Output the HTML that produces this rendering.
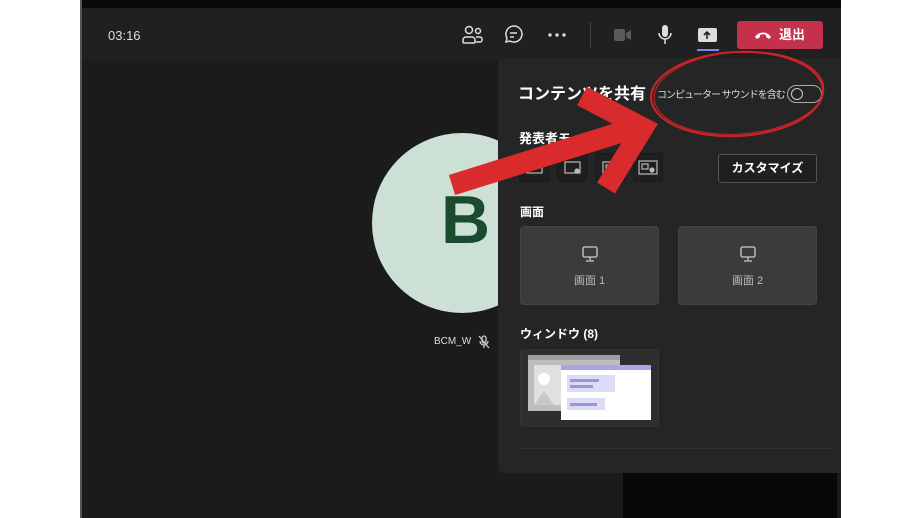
<!DOCTYPE html><html><head><meta charset="utf-8"><style>
*{margin:0;padding:0;box-sizing:border-box}
body{width:921px;height:518px;background:#fff;position:relative;overflow:hidden;font-family:"Liberation Sans","Noto Sans CJK JP",sans-serif;color:#fff}
.a{position:absolute}
.mb{position:absolute;width:30px;height:29px;border:1px solid #1a1a1a;background:#1f1f1f;border-radius:3px;top:153px}
.card{position:absolute;background:#3b3b3b;border-radius:4px;border:1px solid #444}
</style></head><body>
<div class="a" style="left:80px;top:0;width:2px;height:518px;background:#555"></div>
<div class="a" style="left:82px;top:0;width:759px;height:518px;background:#1b1b1b"></div>
<div class="a" style="left:82px;top:0;width:759px;height:8px;background:#0a0a0a"></div>
<div class="a" style="left:82px;top:8px;width:759px;height:53px;background:#202020"></div>
<div class="a" style="left:108px;top:28px;font-size:13px;color:#ddd">03:16</div>
<svg class="a" style="left:455px;top:20px" width="380" height="36" viewBox="455 20 380 36" fill="none" stroke="#ddd" stroke-width="1.5">
<circle cx="469" cy="30" r="3.5"/><circle cx="478" cy="31" r="2.5"/><path d="M463 42v-2a3 3 0 0 1 3-3h6a3 3 0 0 1 3 3v2a1 1 0 0 1-1 1h-10a1 1 0 0 1-1-1zM476 37h4a2 2 0 0 1 2 2v1a2 2 0 0 1-2 2h-4"/>
<path d="M506 42l1-4a8 8 0 1 1 3 3z"/><path d="M510 33h7M510 37h4"/>
<g fill="#ddd" stroke="none"><circle cx="550" cy="35" r="1.7"/><circle cx="557" cy="35" r="1.7"/><circle cx="564" cy="35" r="1.7"/>
<rect x="614" y="29" width="11" height="12" rx="2" fill="#5a5a5a"/><path d="M626 33l5-3v10l-5-3z" fill="#5a5a5a"/>
<rect x="662" y="25" width="6" height="12" rx="3"/>
<rect x="698" y="28" width="19" height="14" rx="2"/><rect x="697" y="49" width="22" height="2" fill="#7f85f5"/></g>
<path d="M659 33a6 6 0 0 0 12 0M665 39v5"/>
<path d="M707 39v-7M704 35l3-3 3 3" stroke="#202020" stroke-width="1.6"/>
</svg>
<div class="a" style="left:590px;top:22px;width:1px;height:26px;background:#444"></div>
<div class="a" style="left:737px;top:21px;width:86px;height:28px;background:#c4314b;border-radius:3px;font-size:13px;font-weight:bold;line-height:28px;padding-left:42px">退出</div>
<svg class="a" style="left:753px;top:29px" width="20" height="12"><path d="M2 8c4-6 12-6 16 0l-2 2-3-2v-2c-2-1-4-1-6 0v2l-3 2z" fill="#fff"/></svg>
<div class="a" style="left:372px;top:133px;width:180px;height:180px;border-radius:50%;background:#cde0d6"></div>
<div class="a" style="left:441px;top:186px;font-size:68px;font-weight:bold;color:#1c4a2e;line-height:68px">B</div>
<div class="a" style="left:434px;top:336px;font-size:10px;color:#ddd">BCM_W</div>
<svg class="a" style="left:478px;top:335px" width="12" height="14" fill="none" stroke="#ccc" stroke-width="1.3"><rect x="4" y="1" width="4" height="7" rx="2"/><path d="M2 6a4 4 0 0 0 8 0M6 10v3M1 1l10 12"/></svg>
<div class="a" style="left:498px;top:58px;width:343px;height:415px;background:#252525;border-radius:4px 0 0 4px"></div>
<div class="a" style="left:623px;top:473px;width:214px;height:45px;background:#080808"></div>
<div class="a" style="left:518px;top:80px;font-size:16px;font-weight:bold">コンテンツを共有</div>
<div class="a" style="left:657px;top:86px;font-size:10px;letter-spacing:-1px;color:#ddd;white-space:nowrap">コンピューター サウンドを含む</div>
<div class="a" style="left:787px;top:85px;width:35px;height:18px;border:1px solid #aaa;border-radius:9px"></div>
<div class="a" style="left:791px;top:88px;width:12px;height:12px;border:1.5px solid #ccc;border-radius:50%"></div>
<div class="a" style="left:519px;top:128px;font-size:13px;font-weight:bold">発表者モード</div>
<div class="mb" style="left:519px"></div><div class="mb" style="left:557px"></div><div class="mb" style="left:595px"></div><div class="mb" style="left:633px"></div>
<svg class="a" style="left:519px;top:153px" width="150" height="30" fill="none" stroke="#bbb" stroke-width="1.2">
<rect x="8" y="9" width="15" height="11"/><rect x="46" y="9" width="15" height="11"/><circle cx="58" cy="18" r="2" fill="#bbb"/><rect x="84" y="9" width="15" height="11"/><rect x="87" y="12" width="6" height="5"/><rect x="120" y="8" width="18" height="13"/><rect x="123" y="11" width="6" height="5"/><circle cx="133" cy="17" r="2" fill="#bbb"/></svg>
<div class="a" style="left:718px;top:154px;width:99px;height:29px;border:1px solid #555;background:#1f1f1f;border-radius:3px;font-size:12px;font-weight:bold;text-align:center;line-height:27px">カスタマイズ</div>
<div class="a" style="left:520px;top:203px;font-size:12px;font-weight:bold">画面</div>
<div class="card" style="left:520px;top:226px;width:139px;height:79px"></div>
<div class="card" style="left:678px;top:226px;width:139px;height:79px"></div>
<svg class="a" style="left:581px;top:246px" width="18" height="17" fill="none" stroke="#ccc" stroke-width="1.3"><rect x="2" y="1" width="14" height="10" rx="1.5"/><path d="M9 11v3M5 15h8"/></svg>
<svg class="a" style="left:739px;top:246px" width="18" height="17" fill="none" stroke="#ccc" stroke-width="1.3"><rect x="2" y="1" width="14" height="10" rx="1.5"/><path d="M9 11v3M5 15h8"/></svg>
<div class="a" style="left:574px;top:272px;font-size:11px;color:#bbb">画面 1</div>
<div class="a" style="left:732px;top:272px;font-size:11px;color:#bbb">画面 2</div>
<div class="a" style="left:520px;top:325px;font-size:12px;font-weight:bold">ウィンドウ (8)</div>
<div class="card" style="left:520px;top:349px;width:139px;height:78px;background:#2e2e2e;border-color:#333"></div>
<svg class="a" style="left:528px;top:354px" width="125" height="70">
<rect x="0" y="1" width="92" height="56" fill="#bdbdbd"/><rect x="0" y="1" width="92" height="5" fill="#9e9e9e"/><rect x="6" y="11" width="30" height="40" fill="#e0e0e0"/><circle cx="16" cy="25" r="6" fill="#fff"/><path d="M6 51l10-14 10 14z" fill="#c8c8c8"/>
<rect x="33" y="11" width="90" height="55" fill="#fff"/><rect x="33" y="11" width="90" height="5" fill="#a9a5e6"/>
<rect x="39" y="21" width="48" height="17" fill="#dcdcf5"/><rect x="42" y="25" width="29" height="3" fill="#9a97d8"/><rect x="42" y="31" width="23" height="3" fill="#9a97d8"/><rect x="39" y="44" width="38" height="12" fill="#dcdcf5"/><rect x="42" y="49" width="27" height="3" fill="#9a97d8"/></svg>
<div class="a" style="left:520px;top:448px;width:311px;height:1px;background:#333"></div>
<svg class="a" style="left:0;top:0" width="921" height="518" fill="none">
<path d="M452 185L628 130" stroke="#d92b2b" stroke-width="21"/>
<path d="M582 96L643 128L606 188" stroke="#d92b2b" stroke-width="21" stroke-linejoin="miter"/>
<ellipse cx="737" cy="94" rx="86" ry="42" transform="rotate(-3 737 94)" stroke="#c8232a" stroke-width="2.2"/>
<ellipse cx="739" cy="93" rx="85" ry="41" transform="rotate(-4 739 93)" stroke="#c8232a" stroke-width="1"/>
</svg>
</body></html>
